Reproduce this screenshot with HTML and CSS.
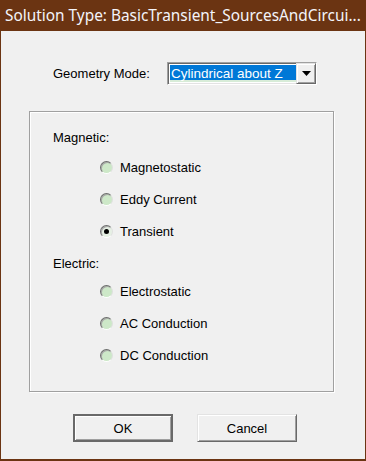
FILE: index.html
```html
<!DOCTYPE html>
<html>
<head>
<meta charset="utf-8">
<link rel="stylesheet" href="styles.css">
</head>
<body>
<div class="window">
  <div class="titlebar">Solution Type: BasicTransient_SourcesAndCircui...</div>
  <div class="content">
    <div class="geom-row">
      <span class="geom-label">Geometry Mode:</span>
      <div class="combo">
        <div class="combo-value">Cylindrical about Z</div>
        <div class="combo-btn">
          <svg width="9" height="5" viewBox="0 0 9 5"><path d="M0 0H9L4.5 5Z" fill="#000"/></svg>
        </div>
      </div>
    </div>
    <div class="group">
      <div class="group-label">Magnetic:</div>
      <div class="radio-row"><span class="radio"></span><span>Magnetostatic</span></div>
      <div class="radio-row"><span class="radio"></span><span>Eddy Current</span></div>
      <div class="radio-row"><span class="radio checked"></span><span>Transient</span></div>
      <div class="group-label second">Electric:</div>
      <div class="radio-row"><span class="radio"></span><span>Electrostatic</span></div>
      <div class="radio-row"><span class="radio"></span><span>AC Conduction</span></div>
      <div class="radio-row"><span class="radio"></span><span>DC Conduction</span></div>
    </div>
    <div class="buttons">
      <div class="btn default">OK</div>
      <div class="btn">Cancel</div>
    </div>
  </div>
</div>
</body>
</html>
```

FILE: styles.css
```css
html, body {
  margin: 0;
  padding: 0;
  background: #6b3412;
}
.window {
  width: 366px;
  height: 461px;
  box-sizing: border-box;
  border-left: 1px solid #6b3412;
  border-right: 1px solid #6b3412;
  border-bottom: 2px solid #6b3412;
  display: flex;
  flex-direction: column;
  font-family: "Liberation Sans", Arial, sans-serif;
  font-size: 13px;
  color: #000;
}
.titlebar {
  height: 31px;
  flex: none;
  background: #6b3412;
  color: #f4f4fa;
  font-family: "Noto Sans", "Open Sans", sans-serif;
  font-size: 15.4px;
  line-height: 31px;
  padding-left: 5px;
  white-space: nowrap;
  overflow: hidden;
  margin: 0 -1px;
}
.content {
  flex: 1;
  background: #f0f0f0;
  display: flex;
  flex-direction: column;
}
.geom-row {
  display: flex;
  align-items: center;
  margin-top: 31px;
  padding-left: 52px;
  height: 23px;
}
.geom-label {
  width: 114px;
}
.combo {
  width: 150px;
  height: 23px;
  box-sizing: border-box;
  border: 1px solid;
  border-color: #a0a0a0 #ffffff #ffffff #a0a0a0;
  box-shadow: inset 1px 1px 0 #696969, inset -1px -1px 0 #e3e3e3;
  padding: 2px;
  display: flex;
  background: #fff;
}
.combo-value {
  flex: 1;
  background: #0078d7;
  color: #fff;
  font-size: 13.5px;
  line-height: 17px;
  padding-left: 1px;
  border-bottom: 2px solid #d8ecd8;
  white-space: nowrap;
}
.combo-btn {
  width: 20px;
  box-sizing: border-box;
  background: #f0f0f0;
  border: 1px solid;
  border-color: #e3e3e3 #696969 #696969 #e3e3e3;
  box-shadow: inset 1px 1px 0 #fff, inset -1px -1px 0 #a0a0a0;
  display: flex;
  align-items: center;
  justify-content: center;
  margin: -2px -2px -2px 0;
}
.group {
  margin: 26px 0 0 28px;
  width: 305px;
  height: 281px;
  box-sizing: border-box;
  border: 1px solid #a0a0a0;
  box-shadow: 1px 1px 0 #fff, inset 1px 1px 0 #fff;
  padding: 16px 0 0 23px;
  display: flex;
  flex-direction: column;
}
.group-label {
  height: 20px;
  line-height: 20px;
  margin-bottom: 3px;
}
.group-label.second {
  margin-top: 7px;
  margin-bottom: 1px;
}
.radio-row {
  height: 32px;
  display: flex;
  align-items: center;
  padding-left: 47px;
}
.radio {
  width: 13px;
  height: 13px;
  box-sizing: border-box;
  border-radius: 50%;
  background: #cde8c8;
  border: 1px solid;
  border-color: #6e6e6e #e0e0e0 #ffffff #6e6e6e;
  box-shadow: inset 1px 1px 0 #a8a8a8;
  margin-right: 7px;
  display: flex;
  align-items: center;
  justify-content: center;
}
.radio.checked {
  background: #e6f0e4;
}
.radio.checked::after {
  content: "";
  width: 5px;
  height: 5px;
  border-radius: 50%;
  background: #000;
}
.buttons {
  display: flex;
  gap: 24px;
  padding-left: 72px;
  margin-top: 22px;
}
.btn {
  width: 100px;
  height: 28px;
  box-sizing: border-box;
  border: 1px solid;
  border-color: #e3e3e3 #696969 #696969 #e3e3e3;
  box-shadow: inset 1px 1px 0 #fff, inset -1px -1px 0 #a0a0a0;
  display: flex;
  align-items: center;
  justify-content: center;
  background: #f0f0f0;
}
.btn.default {
  border: 2px solid #696969;
  box-shadow: inset 1px 1px 0 #fff, inset -1px -1px 0 #a0a0a0;
}
```
